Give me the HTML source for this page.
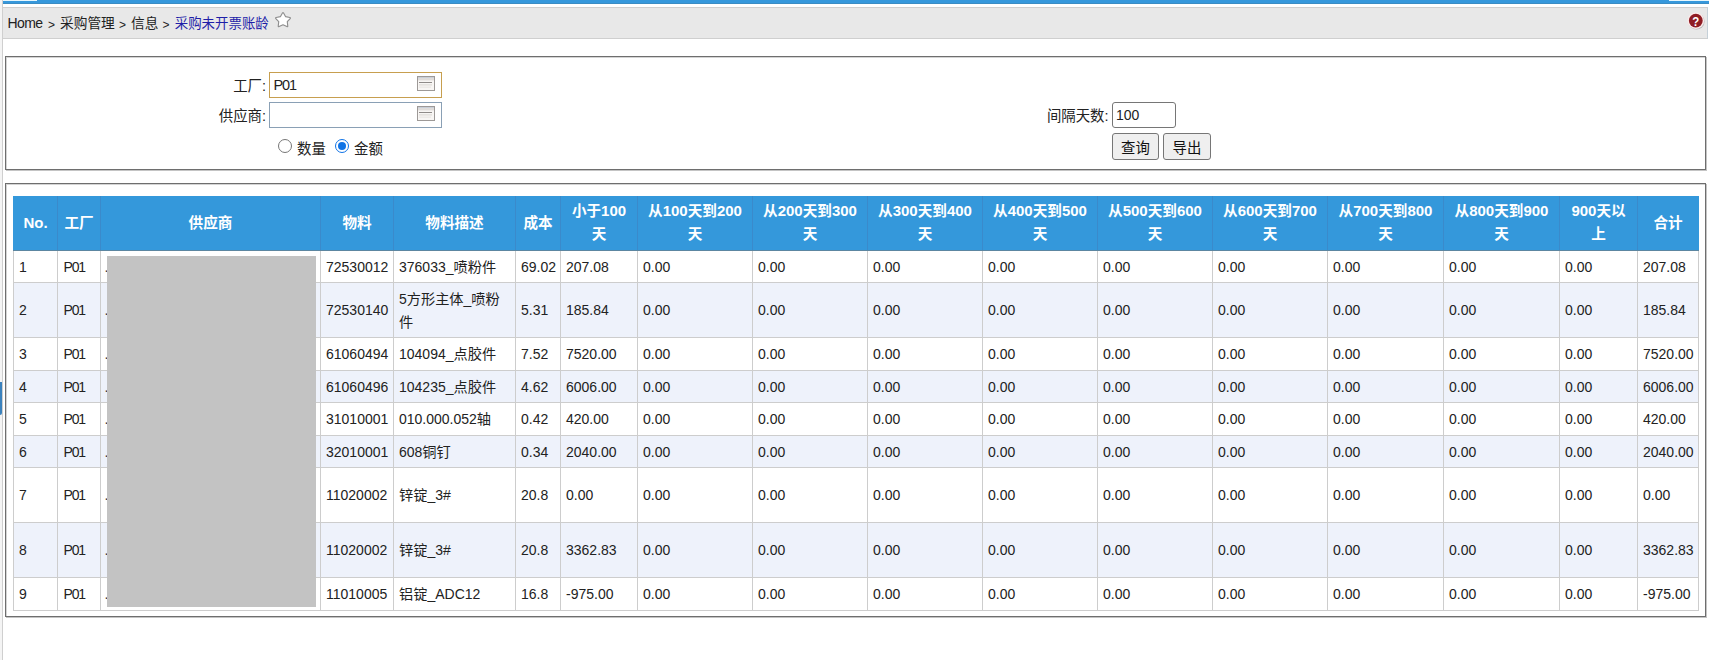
<!DOCTYPE html>
<html lang="zh-CN">
<head>
<meta charset="utf-8">
<title>采购未开票账龄</title>
<style>
html,body{margin:0;padding:0;}
body{width:1709px;height:660px;overflow:hidden;background:#fff;position:relative;
 font-family:"Liberation Sans","Noto Sans CJK SC",sans-serif;font-size:14px;color:#222;}
.abs{position:absolute;}
#lstrip{left:0;top:0;width:2px;height:660px;background:#f4f4f4;}
#lline{left:2px;top:0;width:1px;height:660px;background:#cfcfcf;}
#lmark{left:0;top:382px;width:2px;height:33px;background:#3b82bd;border-radius:0 0 2px 0;}
#topbar{left:3px;top:0;width:1706px;height:3px;background:#3698dc;border-bottom:1px solid #3b8cc3;}
#tabl{left:3px;top:0;width:34px;height:1px;background:#e6f7fd;}
#tabr{left:1669px;top:0;width:40px;height:1px;background:#e6f7fd;}
#crumb{left:3px;top:7px;width:1705px;border-right:1px solid #c5d0d8;height:32px;background:#e8e8e8;border-top:1px solid #cfcfcf;border-bottom:1px solid #cfcfcf;box-sizing:border-box;}
#crumbtxt{left:8px;top:13px;font-size:13.6px;line-height:20px;white-space:nowrap;color:#222;}
#crumbtxt span{top:0;}
#crumbtxt .cj{top:1px;font-size:13.7px;}
#crumbtxt .gt{font-size:12px;margin-left:0;top:1.5px;}
#crumbtxt .cur{font-size:13.45px;}
#crumbtxt .cur{color:#1f1fa8;}
.fs{box-sizing:border-box;border:1px solid #6e6e6e;background:#fff;box-shadow:inset 1px 1px 0 #d4d4d4, 1px 1px 0 #c4c4c4;}
#fs1{left:5px;top:56px;width:1701px;height:114px;}
#fs2{left:5px;top:183px;width:1701px;height:434px;}
.lbl{font-size:14.4px;line-height:20px;white-space:nowrap;color:#222;text-align:right;}
.inp{box-sizing:border-box;background:#fff;border:1px solid #8aa0b5;font-size:14px;line-height:24px;padding-left:3px;color:#222;}
table.grid{position:absolute;left:13px;top:196px;border-collapse:collapse;table-layout:fixed;width:1685px;font-size:14px;}
table.grid th{background:#3498db;color:#fff;font-weight:bold;font-size:15px;line-height:22.5px;height:54px;padding:0;box-sizing:border-box;border-left:1px solid #3a8acb;text-align:center;vertical-align:middle;border-bottom:1px solid #5c86a1;}
table.grid th:first-child{border-left:1px solid #3498db;}
table.grid th:last-child{border-right:1px solid #3498db;}
table.grid th .c{font-size:14.6px;}
table.grid td{border:1px solid #cdcdcd;border-top:none;padding:2px 0 0 5px;line-height:22.5px;vertical-align:middle;white-space:nowrap;color:#222;overflow:hidden;}
table.grid td .c{font-size:14.2px;}
table.grid td:nth-child(2){letter-spacing:-1.2px;padding-left:5.5px;}
table.grid tr.alt td{background:#eef2fb;}
i.dot{font-style:normal;margin-left:-1.6px;color:#333;}
.btn{box-sizing:border-box;background:#efefef;border:1px solid #767676;border-radius:3px;font-size:14.4px;line-height:29.5px;text-align:center;color:#111;overflow:hidden;}
.radio{box-sizing:border-box;width:14px;height:14px;border-radius:50%;border:1px solid #767676;background:#fff;}
.radio.on{border-color:#0f73e6;}
.radio.on::after{content:"";position:absolute;left:2px;top:2px;width:8px;height:8px;border-radius:50%;background:#0f73e6;}
#gray{left:107px;top:256px;width:209px;height:351px;background:#c3c3c3;}
</style>
</head>
<body>
<div id="lstrip" class="abs"></div>
<div id="topbar" class="abs"></div>
<div id="tabl" class="abs"></div>
<div id="tabr" class="abs"></div>
<div id="crumb" class="abs"></div>
<div id="lline" class="abs"></div>
<div id="lmark" class="abs"></div>
<div id="crumbtxt" class="abs"><span class="abs" style="left:-0.6px;top:0;font-size:14px;letter-spacing:-0.55px">Home</span><span class="abs gt" style="left:40px">&gt;</span><span class="abs cj" style="left:52px">采购管理</span><span class="abs gt" style="left:111px">&gt;</span><span class="abs cj" style="left:123px">信息</span><span class="abs gt" style="left:154.5px">&gt;</span><span class="abs cj cur" style="left:166.7px">采购未开票账龄</span></div>
<svg class="abs" style="left:273px;top:10.3px" width="20" height="20" viewBox="0 0 20 20"><path d="M7.35 6.66 L9.47 2.93 Q10.00 2.00 10.53 2.93 L12.65 6.66 L16.84 7.52 Q17.89 7.74 17.17 8.53 L14.28 11.69 L14.76 15.95 Q14.88 17.01 13.90 16.57 L10.00 14.80 L6.10 16.57 Q5.12 17.01 5.24 15.95 L5.72 11.69 L2.83 8.53 Q2.11 7.74 3.16 7.52 L7.35 6.66 Z" fill="#fff" stroke="#8e8e8e" stroke-width="1.15" stroke-linejoin="round"/></svg>
<svg class="abs" style="left:1685.6px;top:11px" width="20" height="20" viewBox="0 0 20 20"><circle cx="10.4" cy="10.4" r="8.2" fill="#8f8f8f" opacity="0.5"/><circle cx="9.8" cy="9.7" r="8.3" fill="#fbeaea"/><circle cx="9.8" cy="9.7" r="6.9" fill="#8f1c23"/><text x="9.8" y="14.6" text-anchor="middle" font-family="Liberation Sans, sans-serif" font-weight="bold" font-size="13.5" fill="#fff" transform="translate(1.5 0) scale(0.85 1)">?</text></svg>

<div id="fs1" class="abs fs"></div>
<div class="abs lbl" style="left:166px;top:76px;width:100px">工厂:</div>
<div class="abs inp" style="left:269px;top:72px;width:173px;height:26px;border-color:#c79f4f;font-size:14.5px;letter-spacing:-1.1px;padding-left:3.5px">P01</div>
<div class="abs lbl" style="left:166px;top:106px;width:100px">供应商:</div>
<div class="abs inp" style="left:269px;top:102px;width:173px;height:26px"></div>
<div class="abs lbl" style="left:1008.5px;top:106px;width:100px">间隔天数:</div>
<div class="abs inp" style="left:1112px;top:102px;width:64px;height:26px;border-color:#767676;border-radius:3px">100</div>
<div class="abs btn" style="left:1112px;top:133px;width:47px;height:27px">查询</div>
<div class="abs btn" style="left:1163px;top:133px;width:48px;height:27px">导出</div>

<svg class="abs" style="left:417px;top:76px" width="18" height="15" viewBox="0 0 18 15"><rect x="0.5" y="0.5" width="17" height="14" fill="#f8f6f4" stroke="#9d9997"/><rect x="1" y="1" width="16" height="3.4" fill="#dfdcda"/><rect x="1" y="1" width="16" height="1" fill="#c9cfd8"/><rect x="2" y="6" width="13" height="1" fill="#8f8b89"/><rect x="2" y="8.4" width="13" height="1" fill="#dad6d3"/><rect x="2" y="10.6" width="12" height="1" fill="#e6e3e0"/></svg>
<svg class="abs" style="left:417px;top:106px" width="18" height="15" viewBox="0 0 18 15"><rect x="0.5" y="0.5" width="17" height="14" fill="#f8f6f4" stroke="#9d9997"/><rect x="1" y="1" width="16" height="3.4" fill="#dfdcda"/><rect x="1" y="1" width="16" height="1" fill="#c9cfd8"/><rect x="2" y="6" width="13" height="1" fill="#8f8b89"/><rect x="2" y="8.4" width="13" height="1" fill="#dad6d3"/><rect x="2" y="10.6" width="12" height="1" fill="#e6e3e0"/></svg>
<div class="abs radio" style="left:278px;top:139.4px"></div>
<div class="abs lbl" style="left:297px;top:139px;text-align:left">数量</div>
<div class="abs radio on" style="left:335px;top:139.4px"></div>
<div class="abs lbl" style="left:354px;top:139px;text-align:left">金额</div>

<div id="fs2" class="abs fs"></div>
<table class="grid"><colgroup><col style="width:44px"><col style="width:43px"><col style="width:220px"><col style="width:73px"><col style="width:122px"><col style="width:45px"><col style="width:77px"><col style="width:115px"><col style="width:115px"><col style="width:115px"><col style="width:115px"><col style="width:115px"><col style="width:115px"><col style="width:116px"><col style="width:116px"><col style="width:78px"><col style="width:61px"></colgroup>
<thead><tr><th>No.</th><th><span class="c">工厂</span></th><th><span class="c">供应商</span></th><th><span class="c">物料</span></th><th><span class="c">物料描述</span></th><th><span class="c">成本</span></th><th><span class="c">小于</span>100<br><span class="c">天</span></th><th><span class="c">从</span>100<span class="c">天到</span>200<br><span class="c">天</span></th><th><span class="c">从</span>200<span class="c">天到</span>300<br><span class="c">天</span></th><th><span class="c">从</span>300<span class="c">天到</span>400<br><span class="c">天</span></th><th><span class="c">从</span>400<span class="c">天到</span>500<br><span class="c">天</span></th><th><span class="c">从</span>500<span class="c">天到</span>600<br><span class="c">天</span></th><th><span class="c">从</span>600<span class="c">天到</span>700<br><span class="c">天</span></th><th><span class="c">从</span>700<span class="c">天到</span>800<br><span class="c">天</span></th><th><span class="c">从</span>800<span class="c">天到</span>900<br><span class="c">天</span></th><th>900<span class="c">天以</span><br><span class="c">上</span></th><th><span class="c">合计</span></th></tr></thead>
<tbody>
<tr style="height:32px"><td>1</td><td>P01</td><td><i class="dot">.</i></td><td>72530012</td><td>376033_<span class="c">喷粉件</span></td><td>69.02</td><td>207.08</td><td>0.00</td><td>0.00</td><td>0.00</td><td>0.00</td><td>0.00</td><td>0.00</td><td>0.00</td><td>0.00</td><td>0.00</td><td>207.08</td></tr>
<tr class="alt" style="height:55px"><td>2</td><td>P01</td><td><i class="dot">.</i></td><td>72530140</td><td>5<span class="c">方形主体</span>_<span class="c">喷粉</span><br><span class="c">件</span></td><td>5.31</td><td>185.84</td><td>0.00</td><td>0.00</td><td>0.00</td><td>0.00</td><td>0.00</td><td>0.00</td><td>0.00</td><td>0.00</td><td>0.00</td><td>185.84</td></tr>
<tr style="height:33px"><td>3</td><td>P01</td><td><i class="dot">.</i></td><td>61060494</td><td>104094_<span class="c">点胶件</span></td><td>7.52</td><td>7520.00</td><td>0.00</td><td>0.00</td><td>0.00</td><td>0.00</td><td>0.00</td><td>0.00</td><td>0.00</td><td>0.00</td><td>0.00</td><td>7520.00</td></tr>
<tr class="alt" style="height:32px"><td>4</td><td>P01</td><td><i class="dot">.</i></td><td>61060496</td><td>104235_<span class="c">点胶件</span></td><td>4.62</td><td>6006.00</td><td>0.00</td><td>0.00</td><td>0.00</td><td>0.00</td><td>0.00</td><td>0.00</td><td>0.00</td><td>0.00</td><td>0.00</td><td>6006.00</td></tr>
<tr style="height:33px"><td>5</td><td>P01</td><td><i class="dot">.</i></td><td>31010001</td><td>010.000.052<span class="c">轴</span></td><td>0.42</td><td>420.00</td><td>0.00</td><td>0.00</td><td>0.00</td><td>0.00</td><td>0.00</td><td>0.00</td><td>0.00</td><td>0.00</td><td>0.00</td><td>420.00</td></tr>
<tr class="alt" style="height:32px"><td>6</td><td>P01</td><td><i class="dot">.</i></td><td>32010001</td><td>608<span class="c">铜钉</span></td><td>0.34</td><td>2040.00</td><td>0.00</td><td>0.00</td><td>0.00</td><td>0.00</td><td>0.00</td><td>0.00</td><td>0.00</td><td>0.00</td><td>0.00</td><td>2040.00</td></tr>
<tr style="height:55px"><td>7</td><td>P01</td><td><i class="dot">.</i></td><td>11020002</td><td><span class="c">锌锭</span>_3#</td><td>20.8</td><td>0.00</td><td>0.00</td><td>0.00</td><td>0.00</td><td>0.00</td><td>0.00</td><td>0.00</td><td>0.00</td><td>0.00</td><td>0.00</td><td>0.00</td></tr>
<tr class="alt" style="height:55px"><td>8</td><td>P01</td><td><i class="dot">.</i></td><td>11020002</td><td><span class="c">锌锭</span>_3#</td><td>20.8</td><td>3362.83</td><td>0.00</td><td>0.00</td><td>0.00</td><td>0.00</td><td>0.00</td><td>0.00</td><td>0.00</td><td>0.00</td><td>0.00</td><td>3362.83</td></tr>
<tr style="height:33px"><td>9</td><td>P01</td><td><i class="dot">.</i></td><td>11010005</td><td><span class="c">铝锭</span>_ADC12</td><td>16.8</td><td>-975.00</td><td>0.00</td><td>0.00</td><td>0.00</td><td>0.00</td><td>0.00</td><td>0.00</td><td>0.00</td><td>0.00</td><td>0.00</td><td>-975.00</td></tr>
</tbody></table>
<div id="gray" class="abs"></div>
</body>
</html>
